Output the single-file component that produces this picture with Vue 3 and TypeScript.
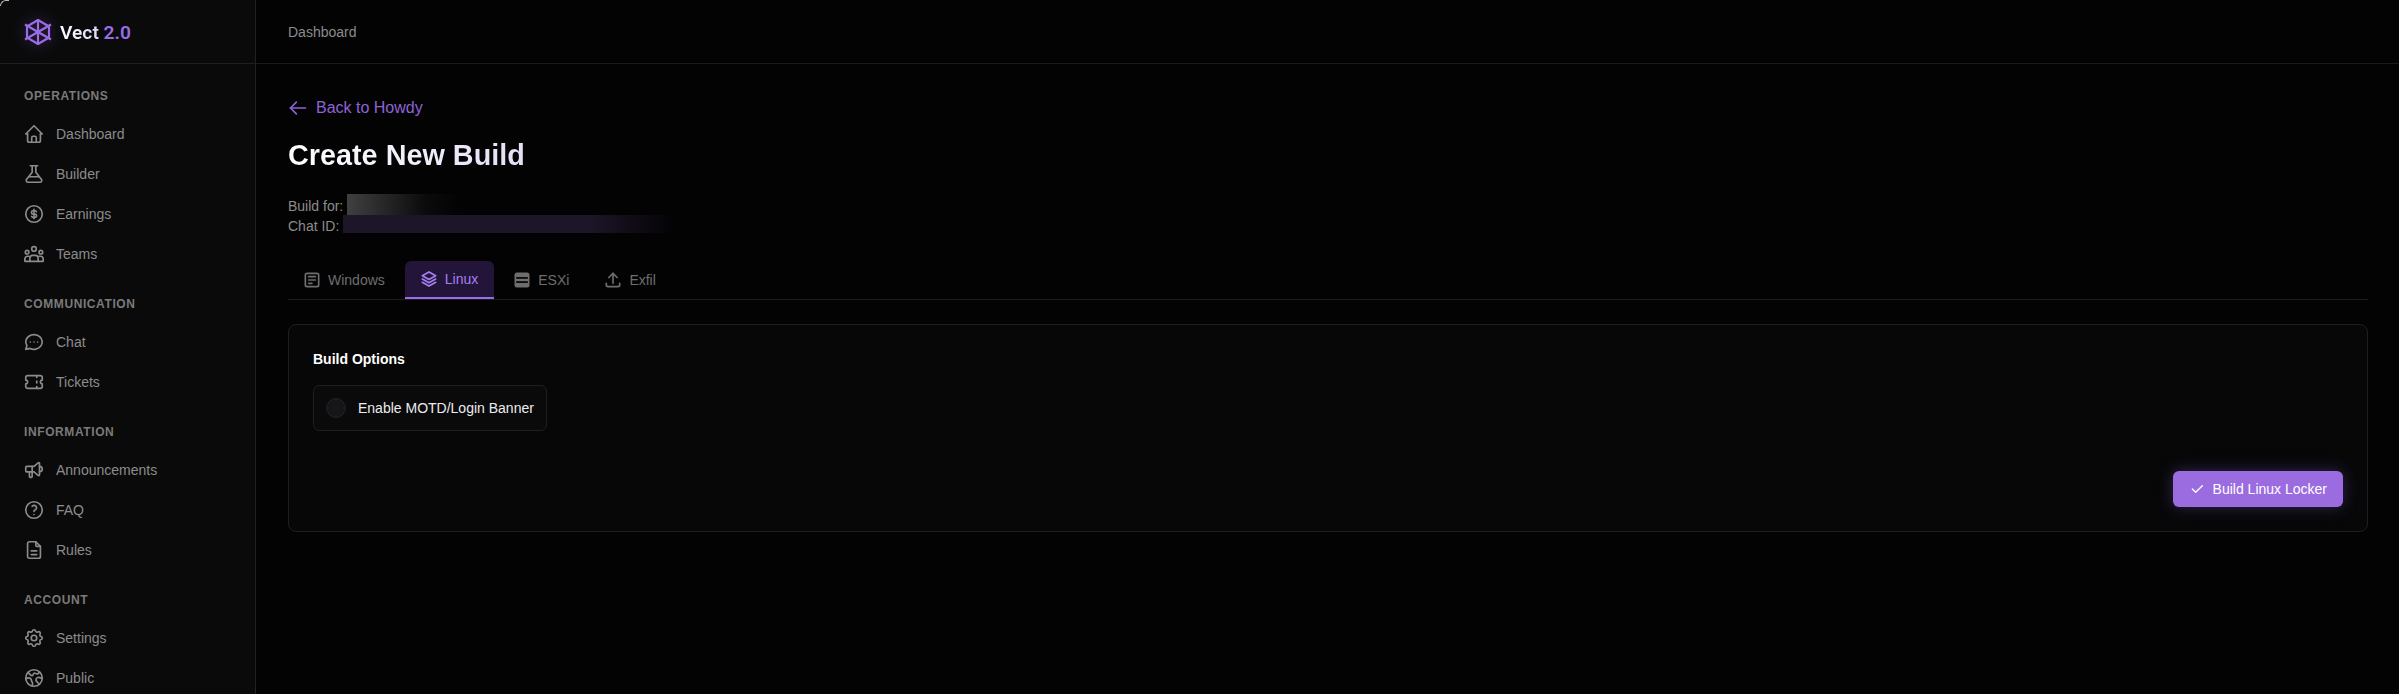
<script setup lang="ts">
interface NavItem {
  label: string;
  paths: string[];
}

interface NavSection {
  title: string;
  items: NavItem[];
}

const sections: NavSection[] = [
  {
    title: "OPERATIONS",
    items: [
      { label: "Dashboard", paths: ["M5 12H3l9-9 9 9h-2", "M5 12v7a2 2 0 0 0 2 2h10a2 2 0 0 0 2-2v-7", "M9.5 21v-5a1.5 1.5 0 0 1 1.5-1.5h2a1.5 1.5 0 0 1 1.5 1.5v5"] },
      { label: "Builder", paths: ["M8 3h8", "M10 3v7L3.8 18a2 2 0 0 0 1.6 3h13.2a2 2 0 0 0 1.6-3L14 10V3", "M6.5 15h11"] },
      { label: "Earnings", paths: ["M12 3a9 9 0 1 0 0 18 9 9 0 0 0 0-18z", "M14.6 9.5a1.8 1.8 0 0 0-1.6-1h-2a1.8 1.8 0 0 0 0 3.6h2a1.8 1.8 0 0 1 0 3.6h-2a1.8 1.8 0 0 1-1.6-1", "M12 7v10"] },
      { label: "Teams", paths: ["M9.5 6.5a2.5 2.5 0 1 0 5 0 2.5 2.5 0 0 0-5 0", "M7.5 20v-3.5a3 3 0 0 1 3-3h3a3 3 0 0 1 3 3V20z", "M2.5 10a2 2 0 1 0 4 0 2 2 0 0 0-4 0", "M17.5 10a2 2 0 1 0 4 0 2 2 0 0 0-4 0", "M7.5 20H2v-2.5a3 3 0 0 1 3-3h1.5", "M16.5 20H22v-2.5a3 3 0 0 0-3-3h-1.5"] },
    ],
  },
  {
    title: "COMMUNICATION",
    items: [
      { label: "Chat", paths: ["M3 20l1.3-3.9C2 12.7 2.9 8.2 6.4 5.7c3.5-2.5 8.6-2.3 11.8.5 3.3 2.8 3.7 7.3 1 10.5-2.7 3.2-7.6 4.2-11.5 2.3L3 20", "M8 12v.01", "M12 12v.01", "M16 12v.01"] },
      { label: "Tickets", paths: ["M15 5v2", "M15 11v2", "M15 17v2", "M5 5h14a2 2 0 0 1 2 2v3a2 2 0 0 0 0 4v3a2 2 0 0 1-2 2H5a2 2 0 0 1-2-2v-3a2 2 0 0 0 0-4V7a2 2 0 0 1 2-2"] },
    ],
  },
  {
    title: "INFORMATION",
    items: [
      { label: "Announcements", paths: ["M18 8a3 3 0 0 1 0 6", "M10 8v11a1 1 0 0 1-1 1H8a1 1 0 0 1-1-1v-5", "M12 8l4.5-3.8a.9.9 0 0 1 1.5.7v12.2a.9.9 0 0 1-1.5.7L12 14H4a1 1 0 0 1-1-1V9a1 1 0 0 1 1-1h8"] },
      { label: "FAQ", paths: ["M12 3a9 9 0 1 0 0 18 9 9 0 0 0 0-18z", "M12 17v.01", "M12 13.5a1.5 1.5 0 0 1 1-1.5 2.6 2.6 0 1 0-3-4"] },
      { label: "Rules", paths: ["M14 3v4a1 1 0 0 0 1 1h4", "M17 21H7a2 2 0 0 1-2-2V5a2 2 0 0 1 2-2h7l5 5v11a2 2 0 0 1-2 2", "M9 13h6", "M9 17h6"] },
    ],
  },
  {
    title: "ACCOUNT",
    items: [
      { label: "Settings", paths: ["M10.3 4.3c.4-1.8 3-1.8 3.4 0a1.7 1.7 0 0 0 2.6 1.1c1.5-.9 3.3.8 2.3 2.4a1.7 1.7 0 0 0 1.1 2.5c1.8.4 1.8 3 0 3.4a1.7 1.7 0 0 0-1.1 2.6c1 1.5-.8 3.3-2.3 2.3a1.7 1.7 0 0 0-2.6 1.1c-.4 1.8-3 1.8-3.4 0a1.7 1.7 0 0 0-2.6-1.1c-1.5 1-3.3-.8-2.3-2.3a1.7 1.7 0 0 0-1.1-2.6c-1.8-.4-1.8-3 0-3.4a1.7 1.7 0 0 0 1.1-2.5c-1-1.6.8-3.3 2.3-2.4 1 .6 2.3.1 2.6-1.1z", "M9 12a3 3 0 1 0 6 0 3 3 0 0 0-6 0"] },
      { label: "Public", paths: ["M12 3a9 9 0 1 0 0 18 9 9 0 0 0 0-18z", "M5.5 6c2 1.5 2.5 3.5 4.5 3.5 1.5 0 1-3 2.5-3 1 0 1.5 1 3 1 1.2 0 2-1 2-2", "M3.2 13c1.8-1.5 3.8-1.5 5.3 0 1 1 .5 2.5 1.5 3.5.8.8.5 2.5 0 4", "M21 12.5c-1.5-.5-3.5-1.5-5-1-2 .7-2.5 3-1 4.5 1 1 2 1 2.5 3"] },
    ],
  },
];

interface BuildTab {
  label: string;
  active?: boolean;
  solid?: boolean;
  paths: string[];
}

const tabs: BuildTab[] = [
  { label: "Windows", paths: ["M6 4h12a2 2 0 0 1 2 2v12a2 2 0 0 1-2 2H6a2 2 0 0 1-2-2V6a2 2 0 0 1 2-2z", "M8 8h8", "M8 12h8", "M8 16h4"] },
  { label: "Linux", active: true, paths: ["M12 3.5L4 8l8 4.5L20 8z", "M4 12l8 4.5 8-4.5", "M4 16l8 4.5 8-4.5"] },
  { label: "ESXi", solid: true, paths: ["M6 4h12a2 2 0 0 1 2 2v12a2 2 0 0 1-2 2H6a2 2 0 0 1-2-2V6a2 2 0 0 1 2-2z", "M5 9.5h14", "M5 14.5h14"] },
  { label: "Exfil", paths: ["M4 16v2a2 2 0 0 0 2 2h12a2 2 0 0 0 2-2v-2", "M7 9l5-5 5 5", "M12 4v12"] },
];
</script>

<template>
  <div class="shell">
    <aside class="sidebar">
      <div class="brand">
        <svg class="brand-logo" viewBox="0 0 28 28" fill="none" stroke="currentColor" stroke-width="2.2" stroke-linejoin="round" aria-hidden="true">
          <path d="M14 2L25 8.5V19.5L14 26L3 19.5V8.5z" />
          <path d="M14 2V26" />
          <path d="M1 6.5L27 21.5" />
          <path d="M27 6.5L1 21.5" />
        </svg>
        <span class="brand-name"><span class="brand-word">Vect</span> <em>2.0</em></span>
      </div>
      <nav class="nav">
        <section v-for="section in sections" :key="section.title" class="nav-section">
          <h4 class="nav-title">{{ section.title }}</h4>
          <a v-for="item in section.items" :key="item.label" class="nav-item">
            <svg class="nav-icon" viewBox="0 0 24 24" fill="none" stroke="currentColor" stroke-width="1.8" stroke-linecap="round" stroke-linejoin="round" aria-hidden="true">
              <path v-for="d in item.paths" :key="d" :d="d" />
            </svg>
            <span>{{ item.label }}</span>
          </a>
        </section>
      </nav>
    </aside>

    <div class="main">
      <header class="topbar">Dashboard</header>
      <main class="content">
        <a class="back">
          <svg viewBox="0 0 24 24" fill="none" stroke="currentColor" stroke-width="2" stroke-linecap="round" stroke-linejoin="round" aria-hidden="true">
            <path d="M3 12h18" />
            <path d="M3 12l7-7" />
            <path d="M3 12l7 7" />
          </svg>
          Back to Howdy
        </a>
        <h1 class="title">Create New Build</h1>
        <div class="meta">
          <div class="meta-row">Build for: <span class="redact redact-grey" /></div>
          <div class="meta-row">Chat ID: <span class="redact redact-purple" /></div>
        </div>

        <div class="tabs">
          <button v-for="tab in tabs" :key="tab.label" class="tab" :class="{ active: tab.active, solid: tab.solid }">
            <svg viewBox="0 0 24 24" fill="none" stroke="currentColor" stroke-width="2" stroke-linecap="round" stroke-linejoin="round" aria-hidden="true">
              <path v-for="d in tab.paths" :key="d" :d="d" />
            </svg>
            {{ tab.label }}
          </button>
        </div>

        <section class="card">
          <h3 class="card-title">Build Options</h3>
          <label class="option">
            <span class="radio" />
            Enable MOTD/Login Banner
          </label>
          <div class="actions">
            <button class="build">
              <svg viewBox="0 0 24 24" fill="none" stroke="currentColor" stroke-width="2" stroke-linecap="round" stroke-linejoin="round" aria-hidden="true">
                <path d="M5 12l5 5L20 7" />
              </svg>
              Build Linux Locker
            </button>
          </div>
        </section>
      </main>
    </div>
  </div>
</template>

<style>
html,
body {
  margin: 0;
  background: #030304;
}
</style>

<style scoped>
.shell {
  position: relative;
  display: flex;
  height: 694px;
  overflow: hidden;
  background: #030304;
  font-family: "Liberation Sans", Arial, sans-serif;
  font-size: 14px;
  color: #fff;
}

/* the little window corner that shows in the top left */
.shell::before {
  content: "";
  position: absolute;
  top: 0;
  left: 0;
  width: 8px;
  height: 5px;
  border-top: 1px solid #b8b8b8;
  border-left: 1px solid #b8b8b8;
  border-top-left-radius: 8px;
}

.sidebar {
  flex: 0 0 256px;
  box-sizing: border-box;
  background: #0a0a0b;
  border-right: 1px solid #202026;
  overflow: hidden;
}

.brand {
  display: flex;
  align-items: center;
  gap: 8px;
  height: 64px;
  box-sizing: border-box;
  padding: 1px 0 0 24px;
  border-bottom: 1px solid #1f1f22;
}

.brand-logo {
  width: 28px;
  height: 28px;
  color: #9b6ce8;
  filter: drop-shadow(0 0 8px rgba(155, 108, 232, 0.35));
}

.brand-name {
  font-family: Roboto, sans-serif;
  font-size: 19.2px;
  font-weight: 600;
}

.brand-word {
  background: linear-gradient(90deg, #fff, #e2d6fa);
  -webkit-background-clip: text;
  background-clip: text;
  color: transparent;
}

.brand-name em {
  font-style: normal;
  color: #9b6ce8;
}

.nav {
  padding-top: 22px;
}

.nav-section {
  margin-bottom: 20px;
}

.nav-title {
  margin: 0 0 8px;
  padding-left: 24px;
  height: 20px;
  line-height: 20px;
  font-size: 12px;
  font-weight: 700;
  letter-spacing: 0.6px;
  color: #7a7a7a;
}

.nav-item {
  display: flex;
  align-items: center;
  gap: 11px;
  height: 40px;
  padding-left: 23px;
  color: #8c8c8c;
}

.nav-icon {
  width: 22px;
  height: 22px;
  flex: none;
}

.topbar {
  display: flex;
  align-items: center;
  height: 64px;
  box-sizing: border-box;
  padding-left: 32px;
  border-bottom: 1px solid #1a1a1d;
  color: #8c8c8c;
}

.main {
  flex: 1;
  min-width: 0;
}

.content {
  padding: 32px 31px 0 32px;
}

.back {
  display: flex;
  align-items: center;
  gap: 8px;
  height: 24px;
  font-size: 16px;
  color: #9062d8;
}

.back svg {
  width: 20px;
  height: 20px;
}

.title {
  width: fit-content;
  margin: 17px 0 0;
  font-size: 28.8px;
  line-height: 36px;
  font-weight: 700;
  background: linear-gradient(90deg, #fff, #e6def5);
  -webkit-background-clip: text;
  background-clip: text;
  color: transparent;
}

.meta {
  margin-top: 23px;
  line-height: 20px;
  color: #8c8c8c;
}

.meta-row {
  display: flex;
  align-items: flex-start;
  gap: 4px;
  height: 20px;
}

.redact {
  display: block;
}

.redact-grey {
  width: 112px;
  height: 21px;
  margin-top: -2px;
  background: linear-gradient(90deg, #404040, #0b0b0b 70%, #030304);
}

.redact-purple {
  width: 331px;
  height: 18px;
  margin-top: -1px;
  background: linear-gradient(90deg, #1d1528 0, #1d1528 75%, #030304);
}

.tabs {
  display: flex;
  gap: 4px;
  margin-top: 26px;
  border-bottom: 1px solid #1d1d20;
}

.tab {
  display: flex;
  align-items: center;
  gap: 6px;
  height: 38px;
  padding: 0 16px 0 14px;
  border: 0;
  border-bottom: 2px solid transparent;
  margin-bottom: -1px;
  border-radius: 6px 6px 0 0;
  background: transparent;
  font: inherit;
  color: #6e6e6e;
}

.tab svg {
  width: 20px;
  height: 20px;
}

.tab.active {
  background: #23153a;
  border-bottom-color: #9b6ce8;
  color: #a67ef0;
  transform: translateY(-1px);
}

.tab.solid svg path:first-child {
  fill: currentColor;
}

.tab.solid svg path:not(:first-child) {
  stroke: #030304;
  stroke-linecap: butt;
}

.card {
  margin-top: 24px;
  height: 208px;
  box-sizing: border-box;
  padding: 24px;
  display: flex;
  flex-direction: column;
  background: #070708;
  border: 1px solid #1e1e21;
  border-radius: 8px;
}

.card-title {
  margin: 0 0 16px;
  font-size: 14px;
  line-height: 20px;
  font-weight: 700;
}

.option {
  display: flex;
  align-items: center;
  gap: 12px;
  align-self: flex-start;
  height: 46px;
  box-sizing: border-box;
  padding: 0 12px;
  border: 1px solid #1f1f22;
  border-radius: 6px;
  background: #0a0a0b;
  color: #ececee;
}

.radio {
  width: 20px;
  height: 20px;
  box-sizing: border-box;
  border-radius: 50%;
  background: #161618;
  border: 1px solid #222225;
}

.actions {
  margin-top: auto;
  display: flex;
  justify-content: flex-end;
}

.build {
  display: flex;
  align-items: center;
  gap: 8px;
  height: 36px;
  padding: 0 16px;
  border: 0;
  border-radius: 6px;
  background: #9b6ce0;
  box-shadow: 0 0 16px rgba(155, 108, 232, 0.3);
  font: inherit;
  color: #fff;
}

.build svg {
  width: 16px;
  height: 16px;
}
</style>
